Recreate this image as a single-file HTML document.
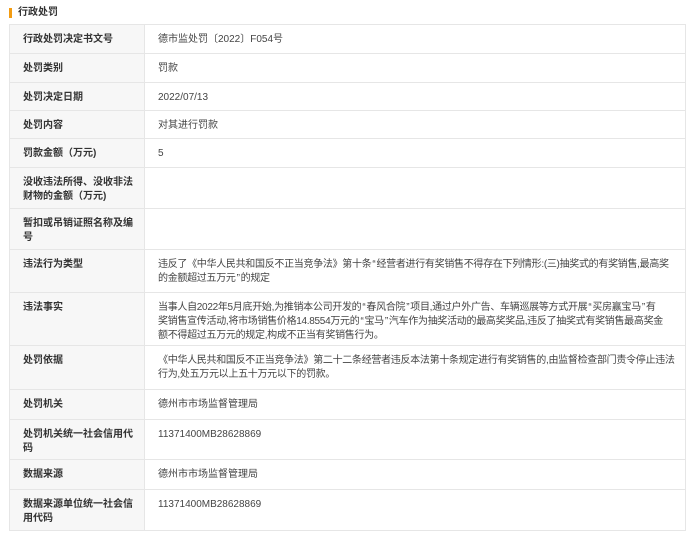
<!DOCTYPE html>
<html><head><meta charset="utf-8"><style>
body{margin:0;background:#fff;font-family:"Liberation Sans","Noto Sans CJK SC",sans-serif;font-size:10px;color:#333;}
.t{position:absolute;left:9px;top:6px;height:14px;line-height:14px;font-size:10px;color:#333;font-weight:bold;}
.t:before{content:"";position:absolute;left:0;top:2px;width:3px;height:10px;background:#f39c12;}
.t span{padding-left:9px;}
table{position:absolute;left:9px;top:24px;width:677px;border-collapse:collapse;table-layout:fixed;}
td{border:1px solid #e6e6e6;vertical-align:top;padding:8px 2px 0 13px;line-height:14px;box-sizing:border-box;word-break:break-all;overflow:hidden;}
td.l{width:135px;background:#f7f7f7;font-weight:bold;color:#333;padding-right:10px;}
td.v{padding-left:13px;color:#444;}
td.n{white-space:nowrap;letter-spacing:-0.3px;}
.q{margin:0 1px;}
</style></head><body>
<div class="t"><span>行政处罚</span></div>
<table>
<tr style="height:29px"><td class="l">行政处罚决定书文号</td><td class="v">德市监处罚〔2022〕F054号</td></tr>
<tr style="height:29px"><td class="l">处罚类别</td><td class="v">罚款</td></tr>
<tr style="height:28px"><td class="l">处罚决定日期</td><td class="v">2022/07/13</td></tr>
<tr style="height:28px"><td class="l">处罚内容</td><td class="v">对其进行罚款</td></tr>
<tr style="height:29px"><td class="l">罚款金额（万元)</td><td class="v">5</td></tr>
<tr style="height:41px"><td class="l">没收违法所得、没收非法财物的金额（万元)</td><td class="v"></td></tr>
<tr style="height:41px"><td class="l">暂扣或吊销证照名称及编号</td><td class="v"></td></tr>
<tr style="height:43px"><td class="l">违法行为类型</td><td class="v n">违反了《中华人民共和国反不正当竞争法》第十条<span class="q">“</span>经营者进行有奖销售不得存在下列情形:(三)抽奖式的有奖销售,最高奖<br>的金额超过五万元<span class="q">”</span>的规定</td></tr>
<tr style="height:53px"><td class="l">违法事实</td><td class="v n">当事人自2022年5月底开始,为推销本公司开发的<span class="q">“</span>春风合院<span class="q">”</span>项目,通过户外广告、车辆巡展等方式开展<span class="q">“</span>买房赢宝马<span class="q">”</span>有<br>奖销售宣传活动,将市场销售价格14.8554万元的<span class="q">“</span>宝马<span class="q">”</span>汽车作为抽奖活动的最高奖奖品,违反了抽奖式有奖销售最高奖金<br>额不得超过五万元的规定,构成不正当有奖销售行为。</td></tr>
<tr style="height:44px"><td class="l">处罚依据</td><td class="v n">《中华人民共和国反不正当竞争法》第二十二条经营者违反本法第十条规定进行有奖销售的,由监督检查部门责令停止违法<br>行为,处五万元以上五十万元以下的罚款。</td></tr>
<tr style="height:30px"><td class="l">处罚机关</td><td class="v">德州市市场监督管理局</td></tr>
<tr style="height:40px"><td class="l">处罚机关统一社会信用代码</td><td class="v">11371400MB28628869</td></tr>
<tr style="height:30px"><td class="l">数据来源</td><td class="v">德州市市场监督管理局</td></tr>
<tr style="height:41px"><td class="l">数据来源单位统一社会信用代码</td><td class="v">11371400MB28628869</td></tr>
</table>
</body></html>
